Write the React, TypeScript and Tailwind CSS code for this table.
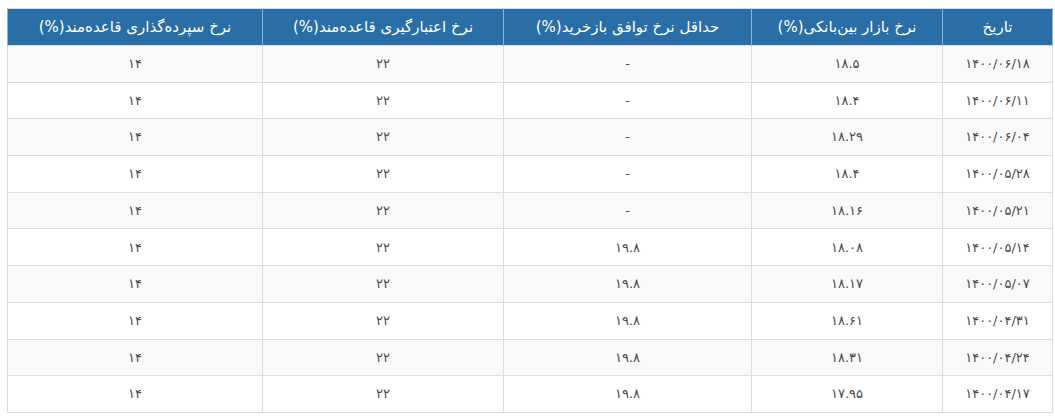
const toFa = (s: string) => s.replace(/[0-9]/g, (d) => "۰۱۲۳۴۵۶۷۸۹"[Number(d)])

const rows: [string, string, string, string, string][] = [
  ["1400/06/18", "18.5", "-", "22", "14"],
  ["1400/06/11", "18.4", "-", "22", "14"],
  ["1400/06/04", "18.29", "-", "22", "14"],
  ["1400/05/28", "18.4", "-", "22", "14"],
  ["1400/05/21", "18.16", "-", "22", "14"],
  ["1400/05/14", "18.08", "19.8", "22", "14"],
  ["1400/05/07", "18.17", "19.8", "22", "14"],
  ["1400/04/31", "18.61", "19.8", "22", "14"],
  ["1400/04/24", "18.31", "19.8", "22", "14"],
  ["1400/04/17", "17.95", "19.8", "22", "14"],
]

const headers = [
  { label: "تاریخ", w: "w-[110px]" },
  { label: "نرخ بازار بین‌بانکی(%)", w: "w-[191px]" },
  { label: "حداقل نرخ توافق بازخرید(%)", w: "w-[248px]" },
  { label: "نرخ اعتبارگیری قاعده‌مند(%)", w: "w-[241px]" },
  { label: "نرخ سپرده‌گذاری قاعده‌مند(%)", w: "w-[255px]" },
]

export default function App() {
  return (
    <div className="min-h-[416px] bg-white pt-[8px] pl-[7px] pr-[3px]" style={{ fontFamily: '"DejaVu Sans", sans-serif' }}>
      <table dir="rtl" className="w-[1045px] table-fixed border-collapse border border-[#dcdcdc] text-[13px] text-[#4a4a4a]">
        <thead>
          <tr className="h-[37px] bg-[#2a6ea7] text-white">
            {headers.map((h) => (
              <th key={h.label} className={`${h.w} border-x border-[#8fb4d3] text-center text-[15px] font-normal`}>
                {h.label}
              </th>
            ))}
          </tr>
        </thead>
        <tbody>
          {rows.map((r, i) => (
            <tr key={r[0]} className={`h-[36.7px] ${i % 2 === 0 ? "bg-[#f9f9f9]" : "bg-white"}`}>
              {r.map((c, j) => (
                <td key={j} className="border border-[#dcdcdc] text-center">
                  {toFa(c)}
                </td>
              ))}
            </tr>
          ))}
        </tbody>
      </table>
    </div>
  )
}
